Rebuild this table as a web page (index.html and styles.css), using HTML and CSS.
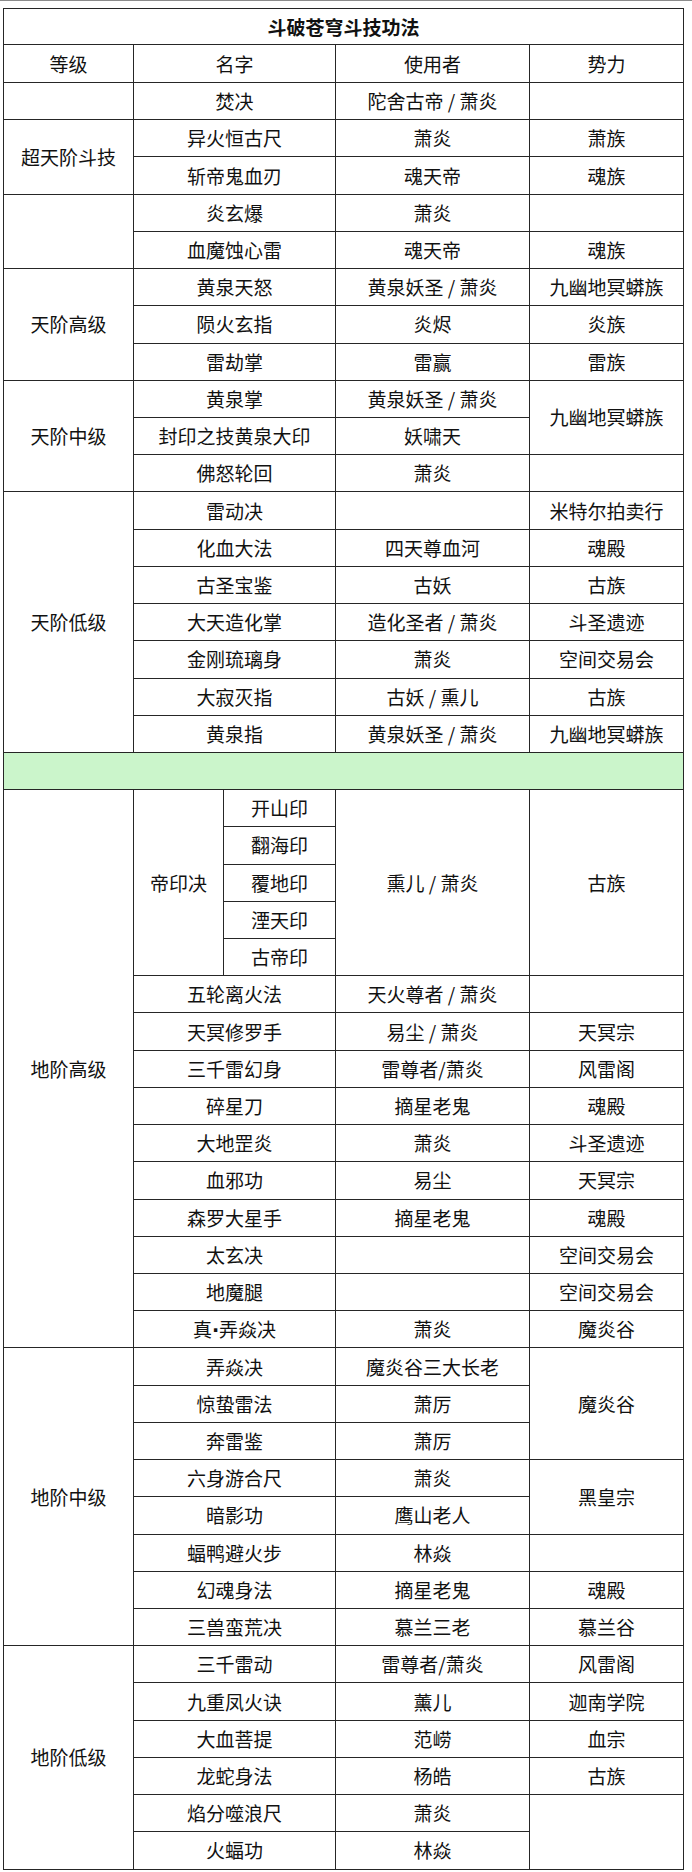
FILE: index.html
```html
<!DOCTYPE html>
<html lang="zh-CN">
<head>
<meta charset="utf-8">
<title>斗破苍穹斗技功法</title>
<link rel="stylesheet" href="styles.css">
</head>
<body>
<div class="topline"></div>
<table class="skills">
  <colgroup>
    <col class="c-grade"><col class="c-na"><col class="c-nb"><col class="c-user"><col class="c-fac">
  </colgroup>
  <tr class="title"><td colspan="5">斗破苍穹斗技功法</td></tr>
  <tr class="head"><td>等级</td><td colspan="2">名字</td><td>使用者</td><td>势力</td></tr>

  <tr class="r"><td></td><td colspan="2">焚决</td><td>陀舍古帝 / 萧炎</td><td></td></tr>

  <tr class="r"><td rowspan="2">超天阶斗技</td><td colspan="2">异火恒古尺</td><td>萧炎</td><td>萧族</td></tr>
  <tr class="r"><td colspan="2">斩帝鬼血刃</td><td>魂天帝</td><td>魂族</td></tr>

  <tr class="r"><td rowspan="2"></td><td colspan="2">炎玄爆</td><td>萧炎</td><td></td></tr>
  <tr class="r"><td colspan="2">血魔蚀心雷</td><td>魂天帝</td><td>魂族</td></tr>

  <tr class="r"><td rowspan="3">天阶高级</td><td colspan="2">黄泉天怒</td><td>黄泉妖圣 / 萧炎</td><td>九幽地冥蟒族</td></tr>
  <tr class="r"><td colspan="2">陨火玄指</td><td>炎烬</td><td>炎族</td></tr>
  <tr class="r"><td colspan="2">雷劫掌</td><td>雷赢</td><td>雷族</td></tr>

  <tr class="r"><td rowspan="3">天阶中级</td><td colspan="2">黄泉掌</td><td>黄泉妖圣 / 萧炎</td><td rowspan="2">九幽地冥蟒族</td></tr>
  <tr class="r"><td colspan="2">封印之技黄泉大印</td><td>妖啸天</td></tr>
  <tr class="r"><td colspan="2">佛怒轮回</td><td>萧炎</td><td></td></tr>

  <tr class="r"><td rowspan="7">天阶低级</td><td colspan="2">雷动决</td><td></td><td>米特尔拍卖行</td></tr>
  <tr class="r"><td colspan="2">化血大法</td><td>四天尊血河</td><td>魂殿</td></tr>
  <tr class="r"><td colspan="2">古圣宝鉴</td><td>古妖</td><td>古族</td></tr>
  <tr class="r"><td colspan="2">大天造化掌</td><td>造化圣者 / 萧炎</td><td>斗圣遗迹</td></tr>
  <tr class="r"><td colspan="2">金刚琉璃身</td><td>萧炎</td><td>空间交易会</td></tr>
  <tr class="r"><td colspan="2">大寂灭指</td><td>古妖 / 熏儿</td><td>古族</td></tr>
  <tr class="r"><td colspan="2">黄泉指</td><td>黄泉妖圣 / 萧炎</td><td>九幽地冥蟒族</td></tr>

  <tr class="r"><td colspan="5" class="green"></td></tr>

  <tr class="r"><td rowspan="15">地阶高级</td><td rowspan="5">帝印决</td><td>开山印</td><td rowspan="5">熏儿 / 萧炎</td><td rowspan="5">古族</td></tr>
  <tr class="r"><td>翻海印</td></tr>
  <tr class="r"><td class="soft">覆地印</td></tr>
  <tr class="r"><td>湮天印</td></tr>
  <tr class="r"><td>古帝印</td></tr>
  <tr class="r"><td colspan="2">五轮离火法</td><td>天火尊者 / 萧炎</td><td></td></tr>
  <tr class="r"><td colspan="2">天冥修罗手</td><td>易尘 / 萧炎</td><td>天冥宗</td></tr>
  <tr class="r"><td colspan="2">三千雷幻身</td><td>雷尊者/萧炎</td><td>风雷阁</td></tr>
  <tr class="r"><td colspan="2">碎星刀</td><td>摘星老鬼</td><td>魂殿</td></tr>
  <tr class="r"><td colspan="2">大地罡炎</td><td>萧炎</td><td>斗圣遗迹</td></tr>
  <tr class="r"><td colspan="2">血邪功</td><td>易尘</td><td>天冥宗</td></tr>
  <tr class="r"><td colspan="2">森罗大星手</td><td>摘星老鬼</td><td>魂殿</td></tr>
  <tr class="r"><td colspan="2">太玄决</td><td></td><td>空间交易会</td></tr>
  <tr class="r"><td colspan="2">地魔腿</td><td></td><td>空间交易会</td></tr>
  <tr class="r"><td colspan="2">真<span class="dot">·</span>弄焱决</td><td>萧炎</td><td>魔炎谷</td></tr>

  <tr class="r"><td rowspan="8">地阶中级</td><td colspan="2">弄焱决</td><td>魔炎谷三大长老</td><td rowspan="3">魔炎谷</td></tr>
  <tr class="r"><td colspan="2">惊蛰雷法</td><td>萧厉</td></tr>
  <tr class="r"><td colspan="2">奔雷鉴</td><td>萧厉</td></tr>
  <tr class="r"><td colspan="2">六身游合尺</td><td>萧炎</td><td rowspan="2">黑皇宗</td></tr>
  <tr class="r"><td colspan="2">暗影功</td><td>鹰山老人</td></tr>
  <tr class="r"><td colspan="2">蝠鸭避火步</td><td>林焱</td><td></td></tr>
  <tr class="r"><td colspan="2">幻魂身法</td><td>摘星老鬼</td><td>魂殿</td></tr>
  <tr class="r"><td colspan="2">三兽蛮荒决</td><td>慕兰三老</td><td>慕兰谷</td></tr>

  <tr class="r"><td rowspan="6">地阶低级</td><td colspan="2">三千雷动</td><td>雷尊者/萧炎</td><td>风雷阁</td></tr>
  <tr class="r"><td colspan="2">九重凤火诀</td><td>薰儿</td><td>迦南学院</td></tr>
  <tr class="r"><td colspan="2">大血菩提</td><td>范崂</td><td>血宗</td></tr>
  <tr class="r"><td colspan="2">龙蛇身法</td><td>杨皓</td><td>古族</td></tr>
  <tr class="r"><td colspan="2">焰分噬浪尺</td><td>萧炎</td><td rowspan="2"></td></tr>
  <tr class="r"><td colspan="2">火蝠功</td><td>林焱</td></tr>
</table>
</body>
</html>
```

FILE: styles.css
```css
html, body {
  margin: 0;
  padding: 0;
  background: #ffffff;
}

body {
  font-family: "Noto Sans CJK SC", "Noto Sans", sans-serif;
  color: #111111;
}

.topline {
  height: 1px;
  background: #8c8c8c;
}

.skills {
  margin: 7px 0 0 3px;
  border-collapse: collapse;
  table-layout: fixed;
  width: 681px;
  font-size: 19px;
  line-height: 22px;
}

.c-grade { width: 130px; }
.c-na { width: 90px; }
.c-nb { width: 112px; }
.c-user { width: 194px; }
.c-fac { width: 154px; }

.skills td {
  border: 1px solid #262626;
  padding: 0;
  text-align: center;
  vertical-align: middle;
  white-space: nowrap;
}

.title { height: 36px; }
.title td { font-weight: bold; }

.head { height: 38px; }

.r { height: 37.23px; }

.skills td.green {
  background: #cbf5cb;
}

.skills td.soft {
  border-top-color: #9a9a9a;
}

.dot {
  font-family: "DejaVu Sans", sans-serif;
  font-weight: bold;
}
```
